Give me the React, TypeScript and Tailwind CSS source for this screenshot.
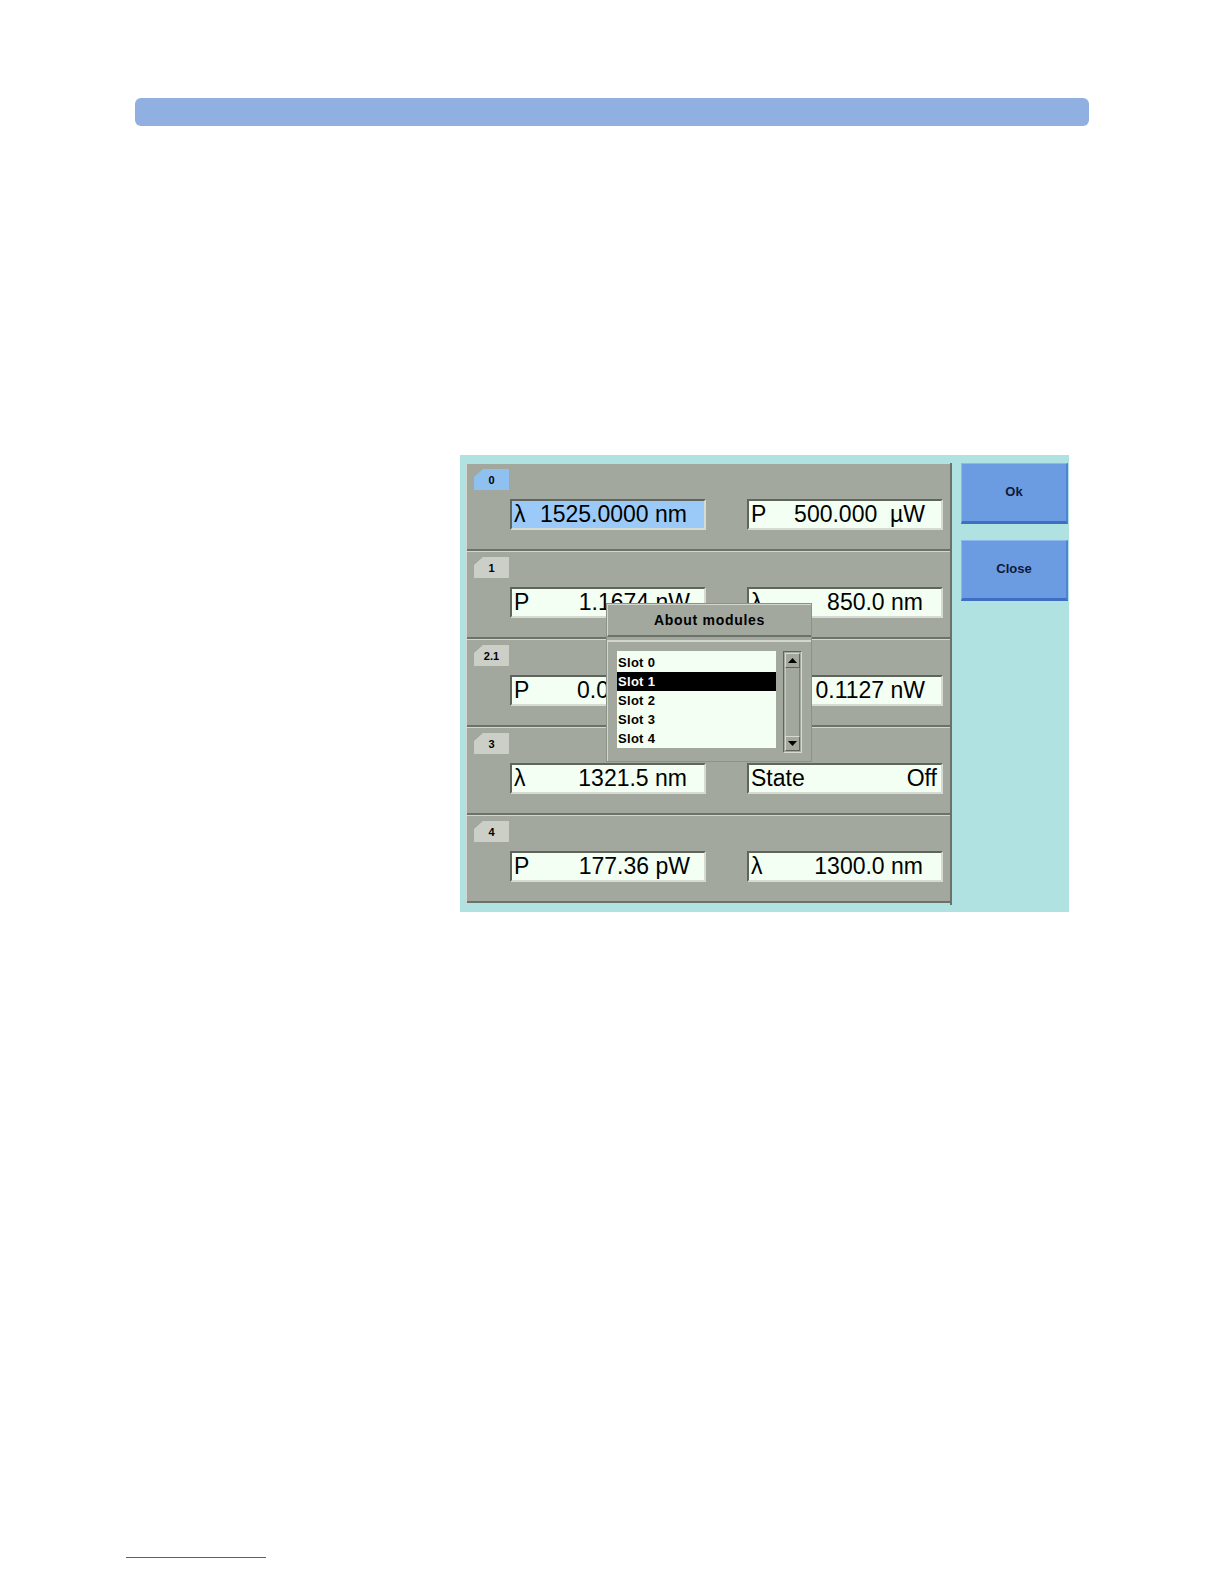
import React from "react";

type Field = {
  label: string;
  value: string;
  pr: string;
  active?: boolean;
};

type Row = {
  slot: string;
  active?: boolean;
  left: Field;
  right: Field;
};

const rows: Row[] = [
  {
    slot: "0",
    active: true,
    left: { label: "λ", value: "1525.0000 nm", pr: "pr-[17px]", active: true },
    right: { label: "P", value: "500.000  µW", pr: "pr-[16px]" },
  },
  {
    slot: "1",
    left: { label: "P", value: "1.1674 nW", pr: "pr-[14px]" },
    right: { label: "λ", value: "850.0 nm", pr: "pr-[18px]" },
  },
  {
    slot: "2.1",
    // most of this row is hidden behind the dialog
    left: { label: "P", value: "0.0", pr: "pr-[95px]" },
    right: { label: "", value: "0.1127 nW", pr: "pr-[16px]" },
  },
  {
    slot: "3",
    left: { label: "λ", value: "1321.5 nm", pr: "pr-[17px]" },
    right: { label: "State", value: "Off", pr: "pr-[4px]" },
  },
  {
    slot: "4",
    left: { label: "P", value: "177.36 pW", pr: "pr-[14px]" },
    right: { label: "λ", value: "1300.0 nm", pr: "pr-[18px]" },
  },
];

const slots = ["Slot 0", "Slot 1", "Slot 2", "Slot 3", "Slot 4"];

function ValueField({ field }: { field: Field }) {
  return (
    <div
      className={`flex h-[31px] w-[196px] items-center justify-between whitespace-pre border-2 border-t-[#5f645c] border-l-[#5f645c] border-b-[#d6dad2] border-r-[#d6dad2] pl-[2px] text-[23px] leading-none text-black ${
        field.active ? "bg-[#9ccaf8]" : "bg-[#f3fff3]"
      } ${field.pr}`}
    >
      <span>{field.label}</span>
      <span>{field.value}</span>
    </div>
  );
}

function SlotRow({ row }: { row: Row }) {
  return (
    <div className="h-[88px] border-t border-t-[#d2d6ce] border-b-2 border-b-[#6c7169] bg-[#a3a89f] pl-[7px] pt-[5px]">
      <div
        className={`flex h-[21px] w-[35px] items-center justify-center pt-[1px] text-[11px] font-bold text-black [clip-path:polygon(9px_0,100%_0,100%_100%,0_100%,0_8px)] ${
          row.active ? "bg-[#8ec0f0]" : "bg-[#cbcfc8]"
        }`}
      >
        {row.slot}
      </div>
      <div className="mt-[9px] ml-[36px] flex gap-[41px]">
        <ValueField field={row.left} />
        <ValueField field={row.right} />
      </div>
    </div>
  );
}

function ArrowBox({ up }: { up?: boolean }) {
  return (
    <div className="flex h-[15px] w-full items-center justify-center border border-t-[#d6dad2] border-l-[#d6dad2] border-b-[#5f645c] border-r-[#5f645c] bg-[#a3a89f]">
      <svg width="9" height="5" viewBox="0 0 9 5">
        {up ? <polygon points="4.5,0 9,5 0,5" fill="#000" /> : <polygon points="0,0 9,0 4.5,5" fill="#000" />}
      </svg>
    </div>
  );
}

function AboutDialog() {
  return (
    <div className="absolute left-[147px] top-[149px] flex h-[157px] w-[204px] flex-col bg-[#a3a89f] shadow-[0_0_0_1px_#8c9189]">
      <div className="flex h-[33px] items-center justify-center border-t border-l border-t-[#d2d6ce] border-l-[#d2d6ce] border-b-2 border-b-[#6c7169] text-[14px] font-bold tracking-[0.7px] text-black">
        About modules
      </div>
      <div className="mt-[3px] flex flex-1 gap-[7px] border-t-2 border-l border-t-[#d2d6ce] border-l-[#d2d6ce] pl-[9px] pt-[9px]">
        <div className="flex h-[97px] w-[159px] flex-col bg-[#f3fff3] pt-[2px] text-[13px] font-bold leading-[19px] tracking-[0.3px] text-black">
          {slots.map((s, i) => (
            <div key={s} className={`h-[19px] pl-[1px] ${i === 1 ? "bg-black text-white" : ""}`}>
              {s}
            </div>
          ))}
        </div>
        <div className="flex h-[102px] w-[19px] flex-col justify-between border border-t-[#5f645c] border-l-[#5f645c] border-b-[#d6dad2] border-r-[#d6dad2] bg-[#a3a89f] p-[1px]">
          <ArrowBox up />
          <div className="mx-auto w-[15px] flex-1 border-x border-l-[#c5c9c1] border-r-[#7a7f77]" />
          <ArrowBox />
        </div>
      </div>
    </div>
  );
}

function SideButton({ label }: { label: string }) {
  return (
    <button
      type="button"
      className="flex h-[61px] w-[107px] items-center justify-center border-t border-l border-t-[#8fb6ee] border-l-[#8fb6ee] border-b-[3px] border-r-2 border-b-[#3f6fc4] border-r-[#5082d6] bg-[#6b9be0] pb-[2px] text-[13px] font-bold text-[#0d1a3a]"
    >
      {label}
    </button>
  );
}

export default function App() {
  return (
    <div className="h-[1560px] w-full overflow-hidden bg-white font-['Liberation_Sans',Arial,sans-serif]">
      <div className="pt-[98px]">
        <div className="mx-[135px] h-[28px] rounded-[6px] bg-[#8fb0e0]" />
      </div>

      <div className="ml-[460px] mt-[329px] w-[609px]">
        <div className="relative flex h-[457px] gap-[9px] bg-[#b0e2e2] pl-[6px] pt-[8px]">
          <div className="flex h-[442px] w-[486px] flex-col border-l border-r-2 border-l-[#d2d6ce] border-r-[#6c7169]">
            {rows.map((row) => (
              <SlotRow key={row.slot} row={row} />
            ))}
          </div>
          <div className="flex flex-col gap-[16px]">
            <SideButton label="Ok" />
            <SideButton label="Close" />
          </div>
          <AboutDialog />
        </div>
      </div>

      <div className="ml-[126px] mt-[645px] h-px w-[140px] bg-[#3b5fc8]" />
    </div>
  );
}
